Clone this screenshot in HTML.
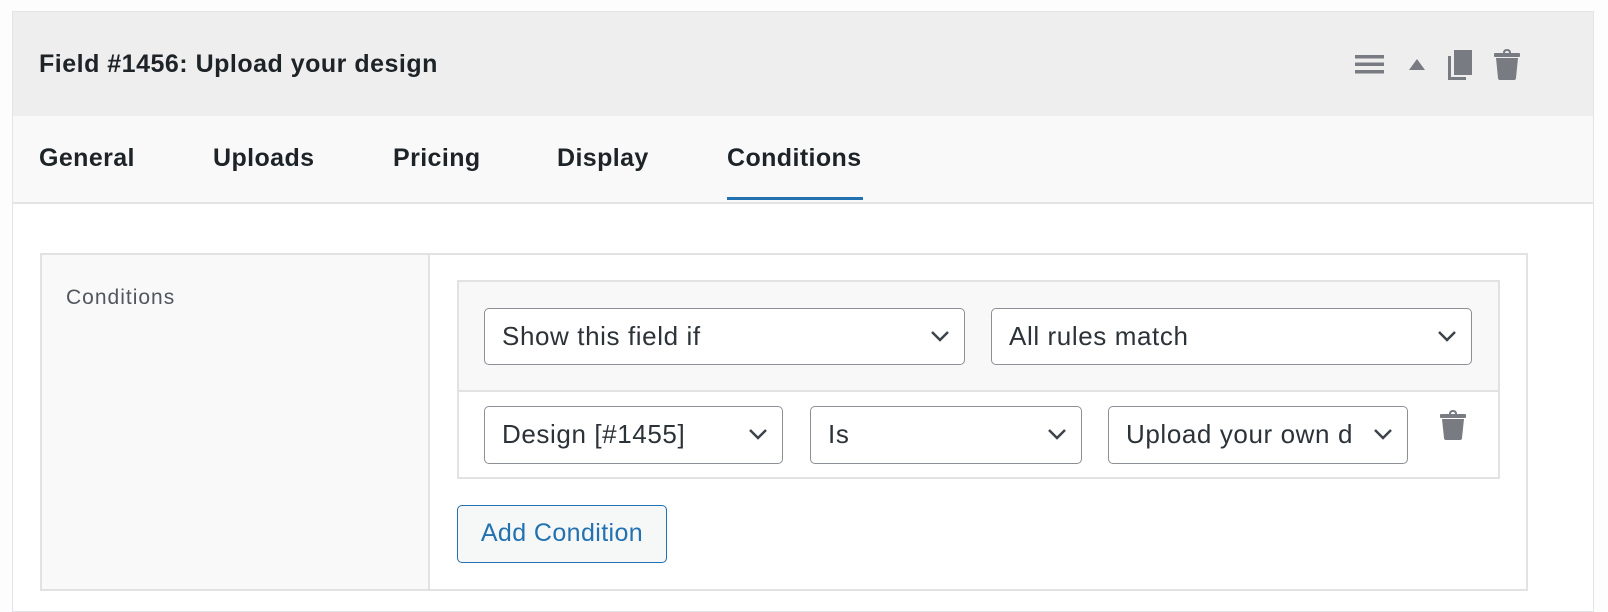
<!DOCTYPE html>
<html><head><style>
*{box-sizing:border-box;margin:0;padding:0}
body{width:1608px;height:612px;background:#fdfdfd;font-family:"Liberation Sans",Arial,sans-serif;position:relative;overflow:hidden;color:#1d2327}
.a{position:absolute}
.sel{position:absolute;border:1.5px solid #8c8f94;border-radius:5px;background:#fff;font-size:26px;letter-spacing:0.6px;color:#2c3338;padding-left:17px;line-height:54px;white-space:nowrap;overflow:hidden}
.sel svg{position:absolute;right:14px;top:20px}
.tab{position:absolute;top:144px;font-size:25px;letter-spacing:0.4px;font-weight:bold;color:#1d2327}
</style></head><body>
<div class="a" style="left:12px;top:11px;width:1582px;height:601px;background:#fff;border:1px solid #e2e4e7"></div>
<div class="a" style="left:13px;top:12px;width:1580px;height:104px;background:#eeeeee"></div>
<div class="a" style="left:39px;top:50px;font-size:25px;letter-spacing:0.5px;font-weight:bold">Field #1456: Upload your design</div>
<svg class="a" style="left:1355px;top:52px" width="30" height="24"><rect x="0" y="3" width="29" height="3.5" fill="#787c82"/><rect x="0" y="10.5" width="29" height="3.5" fill="#787c82"/><rect x="0" y="18" width="29" height="3.5" fill="#787c82"/></svg>
<svg class="a" style="left:1408px;top:58px" width="18" height="14"><polygon points="9,1 17,12 1,12" fill="#787c82"/></svg>
<svg class="a" style="left:1446px;top:48px" width="30" height="34"><rect x="8" y="2" width="18" height="25" fill="#787c82"/><path d="M2 8 V32 H20 V29 H5 V8 Z" fill="#787c82"/></svg>
<svg class="a" style="left:1492px;top:48px" width="30" height="34"><path d="M12 5 Q12 2 15 2 Q18 2 18 5" stroke="#787c82" stroke-width="2" fill="none"/><rect x="2" y="5" width="26" height="4" rx="1" fill="#787c82"/><path d="M4 10 H26 L24 30 Q24 32 22 32 H8 Q6 32 6 30 Z" fill="#787c82"/></svg>
<div class="a" style="left:13px;top:116px;width:1580px;height:88px;background:#f9f9f9;border-bottom:2px solid #e4e4e4"></div>
<div class="tab" style="left:39px">General</div>
<div class="tab" style="left:213px">Uploads</div>
<div class="tab" style="left:393px">Pricing</div>
<div class="tab" style="left:557px">Display</div>
<div class="tab" style="left:727px">Conditions</div>
<div class="a" style="left:727px;top:197px;width:136px;height:3px;background:#2271b1"></div>
<div class="a" style="left:40px;top:253px;width:1488px;height:338px;border:2px solid #e2e2e2;background:#fff"></div>
<div class="a" style="left:42px;top:255px;width:388px;height:334px;background:#f9f9f9;border-right:2px solid #e2e2e2"></div>
<div class="a" style="left:66px;top:286px;font-size:21px;letter-spacing:1px;color:#50575e">Conditions</div>
<div class="a" style="left:457px;top:280px;width:1043px;height:199px;border:2px solid #e2e2e2;background:#fff"></div>
<div class="a" style="left:459px;top:282px;width:1039px;height:110px;background:#f8f8f8;border-bottom:2px solid #e2e2e2"></div>
<div class="sel" style="left:484px;top:308px;width:481px;height:57px">Show this field if<svg width="20" height="14"><path d="M2 3 L10 11 L18 3" stroke="#3c434a" stroke-width="2.5" fill="none"/></svg></div>
<div class="sel" style="left:991px;top:308px;width:481px;height:57px">All rules match<svg width="20" height="14"><path d="M2 3 L10 11 L18 3" stroke="#3c434a" stroke-width="2.5" fill="none"/></svg></div>
<div class="sel" style="left:484px;top:406px;width:299px;height:58px">Design [#1455]<svg width="20" height="14"><path d="M2 3 L10 11 L18 3" stroke="#3c434a" stroke-width="2.5" fill="none"/></svg></div>
<div class="sel" style="left:810px;top:406px;width:272px;height:58px">Is<svg width="20" height="14"><path d="M2 3 L10 11 L18 3" stroke="#3c434a" stroke-width="2.5" fill="none"/></svg></div>
<div class="sel" style="left:1108px;top:406px;width:300px;height:58px;padding-left:17px">Upload your own d<svg style="right:12px;background:#fff" width="24" height="14"><rect width="24" height="14" fill="#fff"/><path d="M4 3 L12 11 L20 3" stroke="#3c434a" stroke-width="2.5" fill="none"/></svg></div>
<svg class="a" style="left:1439px;top:409px" width="28" height="33"><path d="M11 5 Q11 2 14 2 Q17 2 17 5" stroke="#787c82" stroke-width="2" fill="none"/><rect x="1" y="5" width="26" height="4" rx="1" fill="#787c82"/><path d="M3 10 H25 L23 29 Q23 31 21 31 H7 Q5 31 5 29 Z" fill="#787c82"/></svg>
<div class="a" style="left:457px;top:505px;width:210px;height:58px;border:1.5px solid #2271b1;border-radius:5px;background:#f6f7f7;color:#2271b1;font-size:25px;letter-spacing:0.4px;line-height:55px;text-align:center">Add Condition</div>
</body></html>
